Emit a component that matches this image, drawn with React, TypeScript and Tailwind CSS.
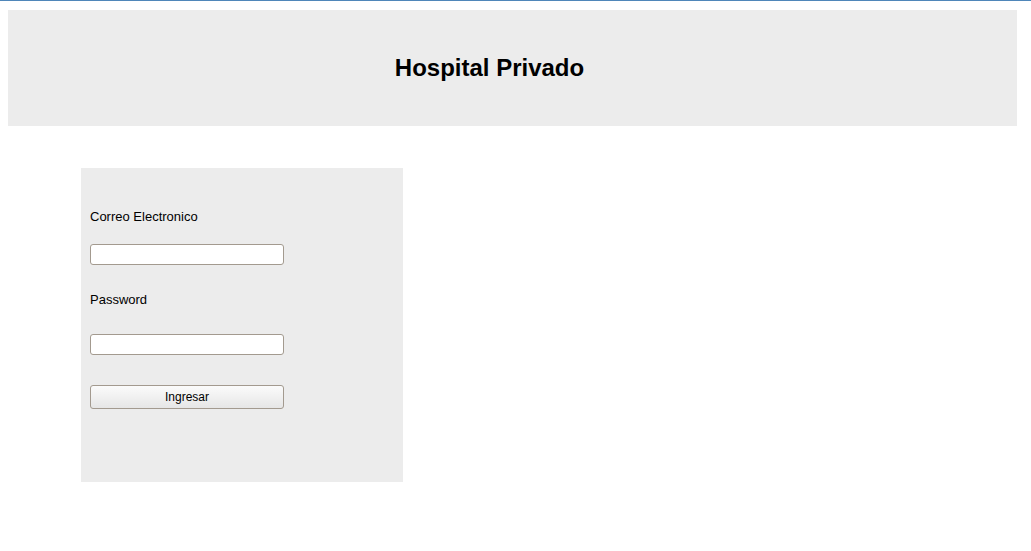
export default function App() {
  return (
    <div className="min-h-[551px] w-full bg-white font-['Liberation_Sans',Arial,sans-serif] text-black">
      <div className="h-px w-full bg-[#4f86b9]" />
      <header className="ml-2 mt-[9px] flex h-[116px] w-[1009px] items-center justify-center bg-[#ececec] pr-[46px]">
        <h1 className="text-[24px] font-bold leading-[28px]">Hospital Privado</h1>
      </header>

      {/* Login form */}
      <form
        className="ml-[81px] mt-[42px] flex h-[314px] w-[322px] flex-col bg-[#ececec] px-[9px] pt-[41px]"
        onSubmit={(e) => e.preventDefault()}
      >
        <label className="text-[13px] leading-[15px]">Correo Electronico</label>
        <input
          type="email"
          className="mt-5 h-[21px] w-[194px] rounded-[3px] border border-[#a39a8f] bg-white px-1 text-[13px] outline-none"
        />
        <label className="mt-[27px] text-[13px] leading-[15px]">Password</label>
        <input
          type="password"
          className="mt-[27px] h-[21px] w-[194px] rounded-[3px] border border-[#a39a8f] bg-white px-1 text-[13px] outline-none"
        />
        <button
          type="submit"
          className="mt-[30px] h-[24px] w-[194px] rounded-[3px] border border-[#a39a8f] bg-gradient-to-b from-[#fbfbfb] to-[#e6e6e6] text-[12px] leading-[14px]"
        >
          Ingresar
        </button>
      </form>
    </div>
  );
}
